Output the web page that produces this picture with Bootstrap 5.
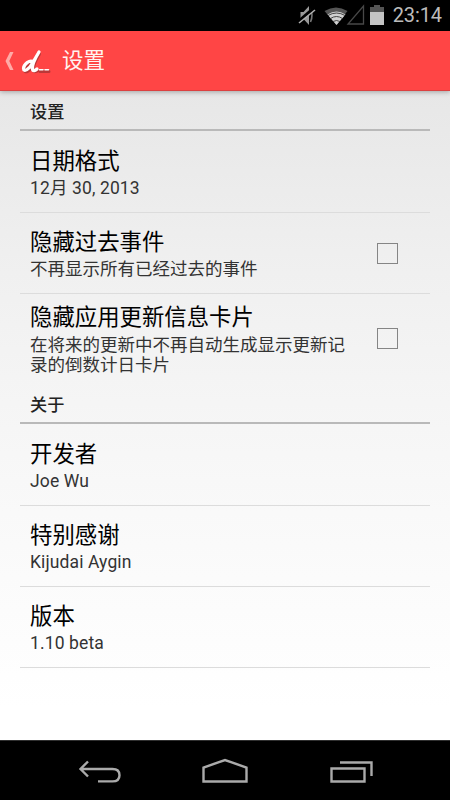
<!DOCTYPE html>
<html lang="zh-CN">
<head>
<meta charset="utf-8">
<meta name="viewport" content="width=device-width, initial-scale=1">
<title>设置</title>
<link href="https://cdn.jsdelivr.net/npm/bootstrap@5.3.0/dist/css/bootstrap.min.css" rel="stylesheet">
<style>
body{font-family:Roboto,"Noto Sans CJK SC",sans-serif;background:#000;color:#000}
.screen{width:450px;height:800px}
.status{height:31px;background:#000;color:#bcbcbc;font-size:20px;line-height:33px;padding-right:8px}
.status .clock{letter-spacing:-.1px}
.appbar{height:60px;background:#ff4545;color:#fff;border-bottom:1px solid #dc4141;box-shadow:0 1px 5px rgba(0,0,0,.3);z-index:1}
.appbar h1{font-size:21.500px;line-height:30px;font-weight:400;color:#fff3f0;padding-top:1px}
.content{background:linear-gradient(#e7e7e7,#f0f0f0 28%,#f8f8f8 60%,#fff 95%);padding:0 20px}
.section-title{height:40px;border-bottom:2px solid #b9b9b9;padding:11px 10px 0;font-size:17.2px;line-height:21px;font-weight:500;color:#222}
.section-title.later{height:39px;padding-top:10px}
.pref{height:81px;padding:14px 10px 0;border-bottom:1px solid #dcdcdc}
.section-title + .pref{height:82px;padding-top:15px}
.pref.tall{height:91px;padding-top:8px;border:0}
.pref h2{font-size:22.4px;line-height:30px;font-weight:400;margin:0}
.pref p{font-size:17.5px;line-height:20px;color:#333;margin:2px 0 0}
.pref.tall p{margin-top:3px}
.latin{letter-spacing:.12px}
.tick{width:21px;height:21px;border:1px solid #858585;border-radius:0;background:transparent;appearance:none;margin:16px 22px 0 0}
.tall .tick{margin-top:26px}
.navkeys{height:60px;background:#000;border-top:1px solid #303030}
</style>
<script src="https://cdn.jsdelivr.net/npm/bootstrap@5.3.0/dist/js/bootstrap.bundle.min.js"></script>
</head>
<body>
<div class="screen d-flex flex-column overflow-hidden">
  <div class="status d-flex justify-content-end align-items-center">
    <svg width="92" height="31" viewBox="298 0 92 31" aria-hidden="true">
      <path d="M301.500 12h3l5.500-6v19l-5.500-6h-3z" fill="#999"/>
      <path d="M311.500 9q3 6 0 13" fill="none" stroke="#777" stroke-width="1.600"/>
      <path d="M300 21 315 8" stroke="#000" stroke-width="3"/>
      <path d="M300 23 316 10" stroke="#b0b0b0" stroke-width="1.600"/>
      <path d="M325.500 11q11.500-7 23 0L337.500 25z" fill="#555"/>
      <path d="M328.500 14.500q9-6 18 0l-9 10.500z" fill="#d0d0d0"/>
      <path d="M329 15.500q8.500-5 17 0M331.500 18.500q6-4 12 0M334 21.500q3.500-2 7 0" fill="none" stroke="#333" stroke-width=".9"/>
      <path d="M364.500 6v18H349z" fill="none" stroke="#484848" stroke-width="1.300"/>
      <path d="M375 5h6v2h4v5h-14V7h4z" fill="#555"/>
      <path d="M371 12h14v13h-14z" fill="#c4c4c4"/>
    </svg>
    <span class="clock ms-1">23:14</span>
  </div>
  <header class="appbar d-flex align-items-center flex-shrink-0 position-relative">
    <svg width="62" height="60" viewBox="0 31 62 60" aria-hidden="true">
      <path d="M10 52h3.500l-4.200 9 4.200 9H10l-4.500-9z" fill="#ffaaa6"/>
      <g fill="none" stroke-linecap="round" stroke-linejoin="round">
        <path d="M33.500 63.500c-3-3-9 3-9 6.500 0 4 6 1 9-6l6-10c-3 5-7 12-6 16.500.5 2 3 1 4.500 0M40 71.500h3.500M45.500 71.500h3.500" stroke="#8c3030" stroke-opacity=".6" stroke-width="3"/>
        <path d="M33 62c-3-3-9.500 2.500-9.500 6.500 0 4 6 1 9-5.500l6.500-11c-3 5-7.500 13-6.500 17.500.5 2 3 1 4.500-.5" stroke="#fff" stroke-width="3.200"/>
        <path d="M39.500 69.800h3.500M45 69.800h3.500" stroke="#fff" stroke-width="1.500"/>
      </g>
    </svg>
    <h1 class="m-0">设置</h1>
  </header>
  <main class="content flex-grow-1">
    <div class="section-title">设置</div>
    <section class="pref"><h2>日期格式</h2><p class="latin">12月 30, 2013</p></section>
    <section class="pref d-flex justify-content-between">
      <div><h2>隐藏过去事件</h2><p>不再显示所有已经过去的事件</p></div>
      <input class="tick" type="checkbox" aria-label="隐藏过去事件">
    </section>
    <section class="pref tall d-flex justify-content-between">
      <div><h2>隐藏应用更新信息卡片</h2><p>在将来的更新中不再自动生成显示更新记<br>录的倒数计日卡片</p></div>
      <input class="tick" type="checkbox" aria-label="隐藏应用更新信息卡片">
    </section>
    <div class="section-title later">关于</div>
    <section class="pref"><h2>开发者</h2><p class="latin">Joe Wu</p></section>
    <section class="pref"><h2>特别感谢</h2><p class="latin">Kijudai Aygin</p></section>
    <section class="pref"><h2>版本</h2><p class="latin">1.10 beta</p></section>
  </main>
  <nav class="navkeys flex-shrink-0">
    <svg class="d-block" width="450" height="59" viewBox="0 741 450 59" fill="none" stroke="#aaa" stroke-width="2.400" aria-label="导航键">
      <path d="M81 769h31.500q7 0 7 6.200t-7 6.200H98M88 761.500l-7.500 7.500 7.500 7.500"/>
      <path d="M203.500 781.500v-14l21.500-7.500 21.500 7.500v14z"/>
      <path d="M331.500 768.500h33v13h-33zM340 762.500h31.500V776"/>
    </svg>
  </nav>
</div>
</body>
</html>
